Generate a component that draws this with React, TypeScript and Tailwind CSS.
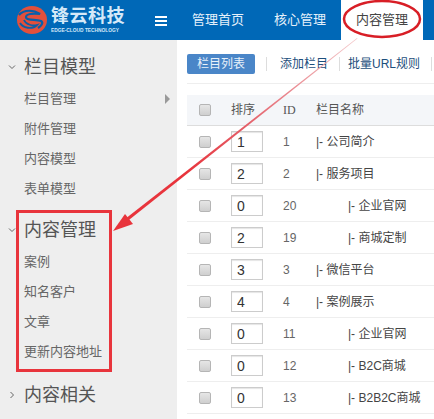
const font = { fontFamily: '"Liberation Sans", "Noto Sans CJK SC", sans-serif' };

const sections = [
  { title: "栏目模型", open: true, items: ["栏目管理", "附件管理", "内容模型", "表单模型"] },
  { title: "内容管理", open: true, items: ["案例", "知名客户", "文章", "更新内容地址"] },
  { title: "内容相关", open: false, items: [] as string[] },
];

const rows = [
  { sort: 1, id: 1, name: "公司简介", sub: false },
  { sort: 2, id: 2, name: "服务项目", sub: false },
  { sort: 0, id: 20, name: "企业官网", sub: true },
  { sort: 2, id: 19, name: "商城定制", sub: true },
  { sort: 3, id: 3, name: "微信平台", sub: false },
  { sort: 4, id: 4, name: "案例展示", sub: false },
  { sort: 0, id: 11, name: "企业官网", sub: true },
  { sort: 0, id: 12, name: "B2C商城", sub: true },
  { sort: 0, id: 13, name: "B2B2C商城", sub: true },
];

function Check() {
  return <span className="block h-[12px] w-[12px] rounded-[2px] border border-[#b5b5b5] bg-gradient-to-b from-[#e6e6e6] to-[#cfcfcf]" />;
}

function Chevron({ open }: { open: boolean }) {
  return (
    <svg width="8" height="8" viewBox="0 0 8 8" className="text-[#666]">
      <path d={open ? "M1 2.5 L4 5.5 L7 2.5" : "M2.5 1 L5.5 4 L2.5 7"} fill="none" stroke="currentColor" strokeWidth="1" />
    </svg>
  );
}

function Logo() {
  return (
    <div className="flex items-center">
      <svg width="30" height="30" viewBox="0 0 30 30" className="shrink-0">
        <ellipse cx="15" cy="15" rx="15" ry="14" fill="#e2503c" />
        <path d="M2 10 C7 4 17 5 23 9 C16 8 9 9 9 12 C9 16 19 14 24 16 C27 18 24 21 21 23" fill="none" stroke="#0a5fa8" strokeWidth="2.2" />
        <path d="M3 18 C6 23 15 25 20 20 C16 21 9 20 7 15" fill="none" stroke="#0a5fa8" strokeWidth="1.8" />
      </svg>
      <div className="ml-[4px] flex flex-col">
        <span className="text-[18px] leading-[21px] font-bold tracking-[0.5px] whitespace-nowrap text-[#d5e9f8]">锋云科技</span>
        <span className="w-[74px] origin-left scale-x-[0.88] text-[5.5px] leading-[7px] font-bold whitespace-nowrap text-[#d5e9f8]">EDGE-CLOUD TECHNOLOGY</span>
      </div>
    </div>
  );
}

export default function App() {
  return (
    <div className="relative h-[419px] w-[434px] overflow-hidden bg-white text-[13px] text-[#555]" style={font}>
      {/* top bar */}
      <header className="flex h-[40px] items-center bg-[#0068b7] pl-[17px]">
        <Logo />
        <div className="ml-[30px] mt-[2px] flex w-[12px] shrink-0 flex-col gap-[2px]">
          <span className="h-[2px] bg-white" />
          <span className="h-[2px] bg-white" />
          <span className="h-[2px] bg-white" />
        </div>
        <nav className="ml-[25px] flex h-full items-center text-[13px] text-[#e4f0fa]">
          <span className="w-[52px] shrink-0">管理首页</span>
          <span className="ml-[30px] w-[52px] shrink-0">核心管理</span>
          <span className="ml-[15px] flex h-full w-[82px] shrink-0 items-center justify-center bg-white text-[#444]">内容管理</span>
        </nav>
      </header>

      <div className="flex h-[379px]">
        {/* side menu */}
        <aside className="h-full w-[177px] shrink-0 bg-[#eeeeee] pt-[10px] text-[#666]">
          {sections.map((s, n) => (
            <div key={s.title} className={n === 1 ? "mb-[11px]" : "mb-[9px]"}>
              <div className="flex h-[34px] items-center pl-[8px]">
                <Chevron open={s.open} />
                <span className="ml-[8px] text-[18px] text-[#555]">{s.title}</span>
              </div>
              {s.items.map((item, i) => (
                <div key={item} className="flex h-[30px] items-center justify-between pl-[24px] pr-[7px]">
                  <span>{item}</span>
                  {s.title === "栏目模型" && i === 0 && (
                    <span className="h-0 w-0 border-y-[5px] border-l-[5px] border-y-transparent border-l-[#999]" />
                  )}
                </div>
              ))}
            </div>
          ))}
        </aside>

        {/* main */}
        <main className="min-w-0 flex-1 pl-[10px] text-[12px]">
          <div className="flex h-[44px] items-center border-b border-[#eee] pt-[4px] text-[#1d4e7c]">
            <span className="flex h-[20px] w-[68px] shrink-0 items-center justify-center rounded-[2px] bg-[#4a86c8] text-[#e8f1fa]">栏目列表</span>
            <span className="ml-[11px] h-[14px] w-px shrink-0 bg-[#ddd]" />
            <span className="ml-[13px] shrink-0 whitespace-nowrap">添加栏目</span>
            <span className="ml-[11px] h-[14px] w-px shrink-0 bg-[#ddd]" />
            <span className="ml-[8px] shrink-0 whitespace-nowrap">批量URL规则</span>
            <span className="ml-[11px] h-[14px] w-px shrink-0 bg-[#ddd]" />
          </div>

          <div className="mt-[11px] flex h-[31px] items-center border-b border-[#ddd] bg-[#f4f6f9] text-[#555]">
            <div className="w-[44px] pl-[12px]"><Check /></div>
            <span className="w-[52px]">排序</span>
            <span className="w-[33px]" style={{ fontFamily: '"Liberation Serif", serif' }}>ID</span>
            <span>栏目名称</span>
          </div>

          {rows.map((r) => (
            <div key={r.id} className="flex h-[32px] items-center border-b border-[#eee] text-[#444]">
              <div className="w-[44px] pl-[12px]"><Check /></div>
              <div className="w-[52px]">
                <input
                  readOnly
                  value={r.sort}
                  className="block h-[21px] w-[32px] border border-[#ccc] pl-[5px] pt-[2px] text-[14px] text-[#333] shadow-[inset_0_1px_1px_#e5e5e5]"
                />
              </div>
              <span className="w-[33px] text-[#666]">{r.id}</span>
              <span className={r.sub ? "pl-[32px] whitespace-nowrap" : "whitespace-nowrap"}>|- {r.name}</span>
            </div>
          ))}
        </main>
      </div>

      {/* red annotations drawn over the screenshot */}
      <div className="absolute left-[16px] top-[210px] h-[162px] w-[96px] border-[3px] border-[#e8343c]" />
      <svg className="pointer-events-none absolute inset-0" width="434" height="419" viewBox="0 0 434 419">
        <defs>
          <linearGradient id="tail" x1="357" y1="38" x2="113" y2="231" gradientUnits="userSpaceOnUse">
            <stop offset="0" stopColor="#f3c9cb" />
            <stop offset="0.45" stopColor="#e4606a" />
            <stop offset="0.7" stopColor="#e8343c" />
          </linearGradient>
        </defs>
        <ellipse cx="382" cy="19" rx="38" ry="18" fill="none" stroke="#d81e26" strokeWidth="2.5" />
        <polygon points="357,38 357.5,38.5 127,221.5 125,219" fill="url(#tail)" />
        <polygon points="113,231 133,224 125,214" fill="#e8343c" />
      </svg>
    </div>
  );
}
